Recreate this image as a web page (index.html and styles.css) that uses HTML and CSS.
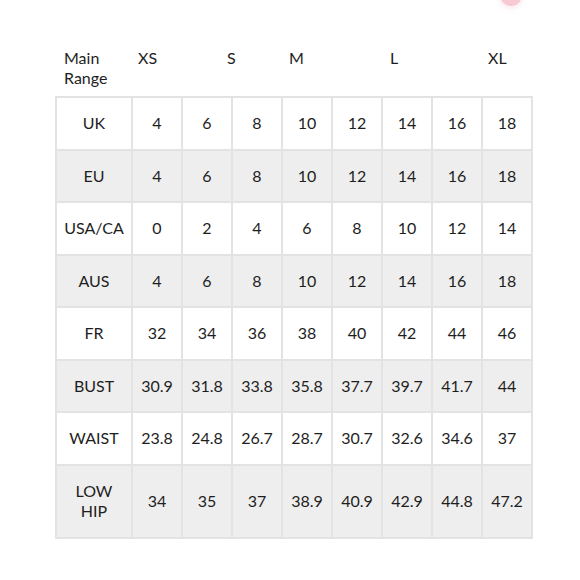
FILE: index.html
```html
<!DOCTYPE html>
<html>
<head>
<meta charset="utf-8">
<link rel="stylesheet" href="styles.css">
</head>
<body>
<div class="dot"></div>
<div class="page">
  <div class="head">
    <div class="hcell">Main<br>Range</div>
    <div class="hcell">XS</div>
    <div class="hcell">S</div>
    <div class="hcell">M</div>
    <div class="hcell">L</div>
    <div class="hcell">XL</div>
  </div>
  <div class="chart">
    <div class="c">UK</div><div class="c">4</div><div class="c">6</div><div class="c">8</div><div class="c">10</div><div class="c">12</div><div class="c">14</div><div class="c">16</div><div class="c">18</div>
    <div class="c g">EU</div><div class="c g">4</div><div class="c g">6</div><div class="c g">8</div><div class="c g">10</div><div class="c g">12</div><div class="c g">14</div><div class="c g">16</div><div class="c g">18</div>
    <div class="c">USA/CA</div><div class="c">0</div><div class="c">2</div><div class="c">4</div><div class="c">6</div><div class="c">8</div><div class="c">10</div><div class="c">12</div><div class="c">14</div>
    <div class="c g">AUS</div><div class="c g">4</div><div class="c g">6</div><div class="c g">8</div><div class="c g">10</div><div class="c g">12</div><div class="c g">14</div><div class="c g">16</div><div class="c g">18</div>
    <div class="c">FR</div><div class="c">32</div><div class="c">34</div><div class="c">36</div><div class="c">38</div><div class="c">40</div><div class="c">42</div><div class="c">44</div><div class="c">46</div>
    <div class="c g">BUST</div><div class="c g">30.9</div><div class="c g">31.8</div><div class="c g">33.8</div><div class="c g">35.8</div><div class="c g">37.7</div><div class="c g">39.7</div><div class="c g">41.7</div><div class="c g">44</div>
    <div class="c">WAIST</div><div class="c">23.8</div><div class="c">24.8</div><div class="c">26.7</div><div class="c">28.7</div><div class="c">30.7</div><div class="c">32.6</div><div class="c">34.6</div><div class="c">37</div>
    <div class="c g">LOW<br>HIP</div><div class="c g">34</div><div class="c g">35</div><div class="c g">37</div><div class="c g">38.9</div><div class="c g">40.9</div><div class="c g">42.9</div><div class="c g">44.8</div><div class="c g">47.2</div>
  </div>
</div>
</body>
</html>
```
FILE: styles.css
```css
html, body {
  margin: 0;
  padding: 0;
  background: #ffffff;
}
body {
  font-family: "Lato", "Noto Sans", sans-serif;
  font-size: 16px;
  color: #1e1e1e;
  width: 580px;
  height: 580px;
  overflow: hidden;
  position: relative;
}
.dot {
  position: absolute;
  left: 500px;
  top: -16px;
  width: 22px;
  height: 22px;
  border-radius: 50%;
  background: #f6c9d3;
  box-shadow: 0 2px 6px rgba(240, 180, 195, 0.35);
}
.page {
  padding: 48px 0 0 55px;
}
.head {
  display: grid;
  grid-template-columns: 74px 89px 62px 101px 98px auto;
  padding-left: 9px;
  height: 48px;
  line-height: 20px;
}
.chart {
  display: grid;
  grid-template-columns: 74px repeat(7, 48px) 48px;
  grid-template-rows: repeat(7, 50.5px) 71px;
  gap: 2px;
  padding: 2px;
  background: #e3e3e3;
  width: 474px;
}
.c {
  background: #ffffff;
  display: flex;
  align-items: center;
  justify-content: center;
  text-align: center;
  line-height: 20px;
}
.c.g {
  background: #eeeeee;
}
```
